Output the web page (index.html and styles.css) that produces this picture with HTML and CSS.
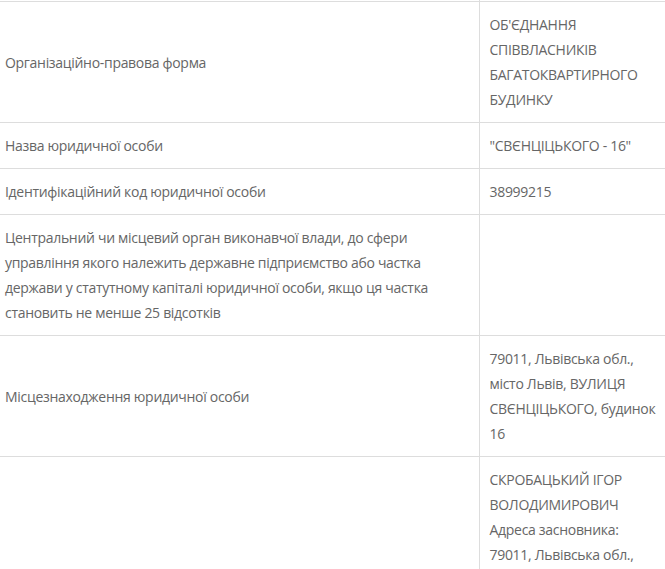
FILE: index.html
```html
<!DOCTYPE html>
<html lang="uk">
<head>
  <meta charset="UTF-8" />
  <meta name="viewport" content="width=device-width, initial-scale=1.0"/>
  <title>Відомості про юридичну особу</title>
  <link rel="stylesheet" href="styles.css">
</head>
<body>
<table class="info-table">
  <colgroup>
    <col class="col-label">
    <col class="col-value">
  </colgroup>
  <tbody>
    <tr class="spacer"><td></td><td></td></tr>
    <tr>
      <td>Організаційно-правова форма</td>
      <td>ОБ'ЄДНАННЯ СПІВВЛАСНИКІВ БАГАТОКВАРТИРНОГО БУДИНКУ</td>
    </tr>
    <tr>
      <td>Назва юридичної особи</td>
      <td>"СВЄНЦІЦЬКОГО - 16"</td>
    </tr>
    <tr>
      <td>Ідентифікаційний код юридичної особи</td>
      <td>38999215</td>
    </tr>
    <tr>
      <td>Центральний чи місцевий орган виконавчої влади, до сфери управління якого належить державне підприємство або частка держави у статутному капіталі юридичної особи, якщо ця частка становить не менше 25 відсотків</td>
      <td></td>
    </tr>
    <tr>
      <td>Місцезнаходження юридичної особи</td>
      <td>79011, Львівська обл., місто Львів, ВУЛИЦЯ СВЄНЦІЦЬКОГО, будинок 16</td>
    </tr>
    <tr>
      <td>Перелік засновників (учасників) юридичної особи</td>
      <td>СКРОБАЦЬКИЙ ІГОР ВОЛОДИМИРОВИЧ<br>Адреса засновника: 79011, Львівська обл., місто Львів, ВУЛИЦЯ СВЄНЦІЦЬКОГО, будинок 16, квартира 1<br>Розмір внеску до статутного фонду: 0.00 грн.<br><br>ЛЕСЬКІВ ОЛЕНА ПЕТРІВНА<br>Адреса засновника: 79011, Львівська обл., місто Львів, ВУЛИЦЯ СВЄНЦІЦЬКОГО, будинок 16, квартира 4<br>Розмір внеску до статутного фонду: 0.00 грн.</td>
    </tr>
  </tbody>
</table>
</body>
</html>
```

FILE: styles.css
```css
body {
  margin: 0;
  background: #fff;
  font-family: 'Open Sans', Arial, sans-serif;
  font-size: 14px;
  letter-spacing: -0.3px;
  color: #666;
  overflow: hidden;
}
.info-table {
  border-collapse: collapse;
  table-layout: fixed;
  width: 670px;
}
.col-label { width: 479px; }
.info-table td {
  border-top: 1px solid #ddd;
  border-bottom: 1px solid #ddd;
  padding: 10px;
  line-height: 25px;
  vertical-align: middle;
}
.info-table td:first-child { padding-left: 5px; }
.info-table td + td { border-left: 1px solid #ddd; }
.info-table .spacer td {
  height: 1px;
  padding: 0;
  border-top: none;
  line-height: 0;
}
```
